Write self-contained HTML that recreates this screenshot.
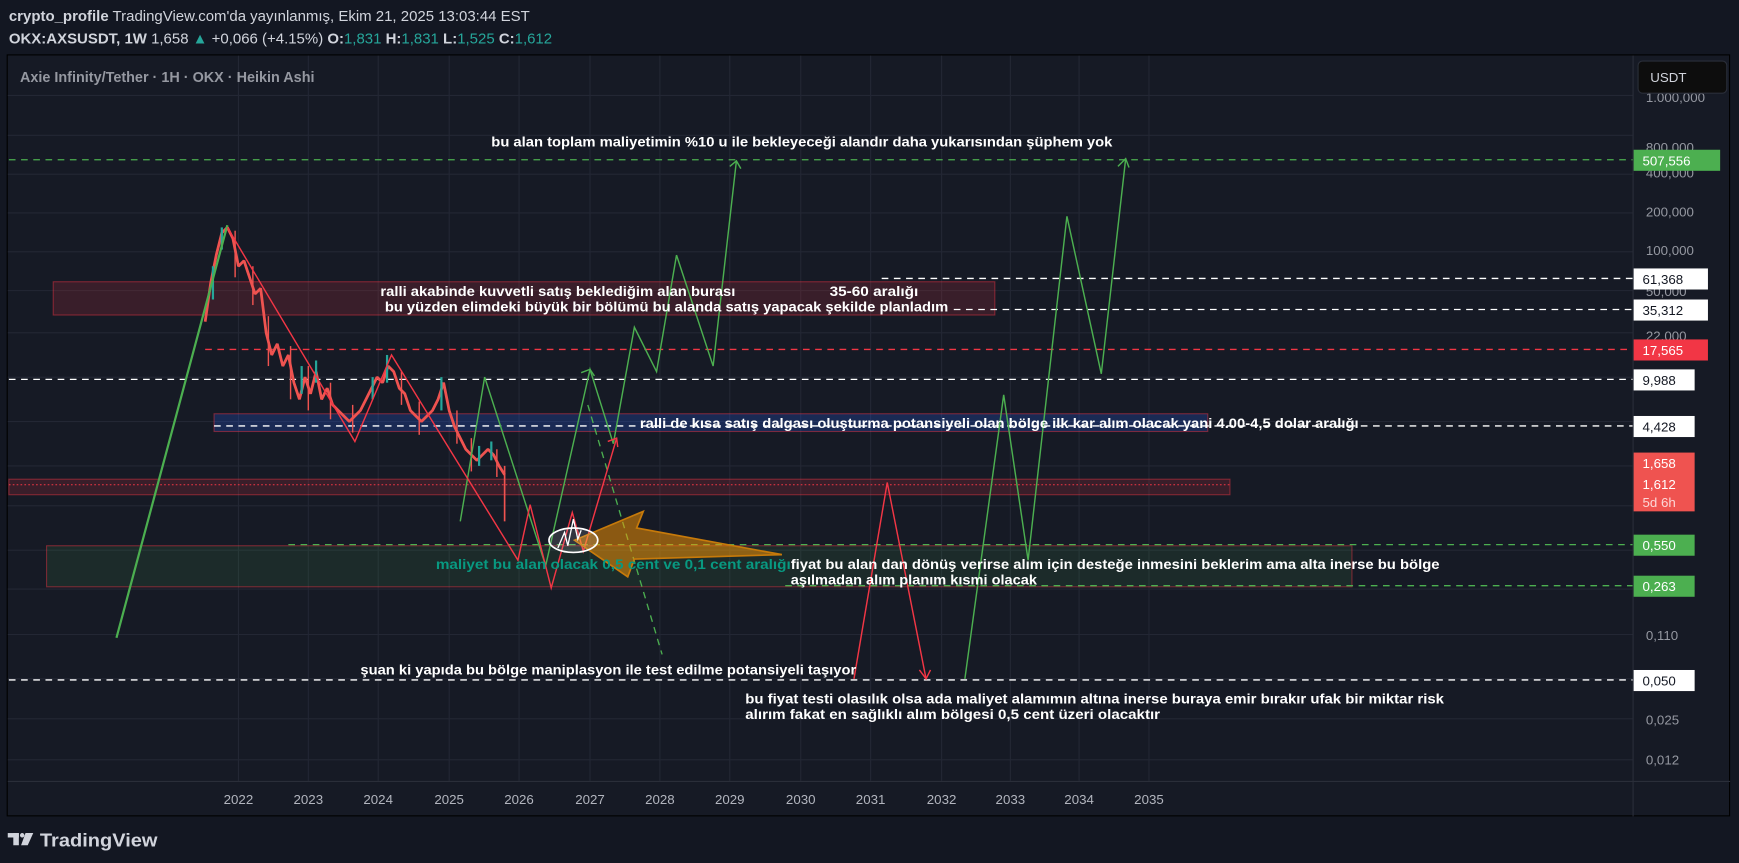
<!DOCTYPE html>
<html><head><meta charset="utf-8"><style>
html,body{margin:0;padding:0;background:#131722;overflow:hidden}
svg{display:block}
text{font-family:"Liberation Sans",sans-serif}
</style></head><body>
<svg width="1739" height="863" viewBox="0 0 1568 778" preserveAspectRatio="none" xmlns="http://www.w3.org/2000/svg">
<rect x="0" y="0" width="1568" height="778" fill="#131722"/>
<!-- header -->
<text x="8" y="19" font-size="13.5" fill="#d1d4dc"><tspan font-weight="bold">crypto_profile</tspan> TradingView.com'da yayınlanmış, Ekim 21, 2025 13:03:44 EST</text>
<text x="8" y="39" font-size="13.5" fill="#d1d4dc"><tspan font-weight="bold">OKX:AXSUSDT, 1W</tspan> 1,658 <tspan fill="#26a69a">▲</tspan> +0,066 (+4.15%) <tspan font-weight="bold">O:</tspan><tspan fill="#26a69a">1,831</tspan> <tspan font-weight="bold">H:</tspan><tspan fill="#26a69a">1,831</tspan> <tspan font-weight="bold">L:</tspan><tspan fill="#26a69a">1,525</tspan> <tspan font-weight="bold">C:</tspan><tspan fill="#26a69a">1,612</tspan></text>
<!-- chart frame -->
<rect x="6.5" y="49.5" width="1553" height="686" fill="#161a25" stroke="#000" stroke-width="1"/>
<g stroke="#232734" stroke-width="1">
<line x1="7" y1="86" x2="1472" y2="86"/><line x1="7" y1="122" x2="1472" y2="122"/><line x1="7" y1="157" x2="1472" y2="157"/><line x1="7" y1="192" x2="1472" y2="192"/><line x1="7" y1="227" x2="1472" y2="227"/><line x1="7" y1="262" x2="1472" y2="262"/><line x1="7" y1="300" x2="1472" y2="300"/><line x1="7" y1="340" x2="1472" y2="340"/><line x1="7" y1="380" x2="1472" y2="380"/><line x1="7" y1="420" x2="1472" y2="420"/><line x1="7" y1="456" x2="1472" y2="456"/><line x1="7" y1="496" x2="1472" y2="496"/><line x1="7" y1="531" x2="1472" y2="531"/><line x1="7" y1="572" x2="1472" y2="572"/><line x1="7" y1="612" x2="1472" y2="612"/><line x1="7" y1="648" x2="1472" y2="648"/><line x1="7" y1="685" x2="1472" y2="685"/>
<line x1="215" y1="50" x2="215" y2="704"/><line x1="278" y1="50" x2="278" y2="704"/><line x1="341" y1="50" x2="341" y2="704"/><line x1="405" y1="50" x2="405" y2="704"/><line x1="468" y1="50" x2="468" y2="704"/><line x1="532" y1="50" x2="532" y2="704"/><line x1="595" y1="50" x2="595" y2="704"/><line x1="658" y1="50" x2="658" y2="704"/><line x1="722" y1="50" x2="722" y2="704"/><line x1="785" y1="50" x2="785" y2="704"/><line x1="849" y1="50" x2="849" y2="704"/><line x1="911" y1="50" x2="911" y2="704"/><line x1="973" y1="50" x2="973" y2="704"/><line x1="1036" y1="50" x2="1036" y2="704"/>
</g>
<line x1="1472.5" y1="50" x2="1472.5" y2="736" stroke="#2a2e39"/>
<line x1="7" y1="704.5" x2="1560" y2="704.5" stroke="#2a2e39"/>
<text x="18" y="74" font-size="13" font-weight="bold" fill="#9598a1">Axie Infinity/Tether · 1H · OKX · Heikin Ashi</text>
<!-- zones -->
<rect x="48" y="254" width="849" height="30" fill="rgba(242,54,69,0.16)" stroke="rgba(242,54,69,0.45)"/>
<rect x="193" y="373" width="896" height="16" fill="rgba(41,98,255,0.22)" stroke="rgba(242,54,69,0.45)"/>
<rect x="8" y="432" width="1101" height="14" fill="rgba(242,54,69,0.16)" stroke="rgba(242,54,69,0.45)"/>
<rect x="42" y="492" width="1177" height="37" fill="rgba(76,175,80,0.12)" stroke="rgba(242,54,69,0.45)"/>
<!-- dashed lines -->
<g stroke-width="1.2" stroke-dasharray="6,5" fill="none">
<line x1="8" y1="144" x2="1472" y2="144" stroke="#4caf50"/>
<line x1="795" y1="251" x2="1472" y2="251" stroke="#fff"/>
<line x1="860" y1="279" x2="1472" y2="279" stroke="#fff"/>
<line x1="185" y1="315" x2="1472" y2="315" stroke="#f23645"/>
<line x1="8" y1="342" x2="1472" y2="342" stroke="#fff"/>
<line x1="193" y1="384" x2="1472" y2="384" stroke="#fff"/>
<line x1="260" y1="491" x2="1472" y2="491" stroke="#4caf50"/>
<line x1="708" y1="528" x2="1472" y2="528" stroke="#4caf50"/>
<line x1="8" y1="613" x2="1472" y2="613" stroke="#fff"/>
<line x1="530" y1="365" x2="597" y2="590" stroke="#4caf50"/>
</g>
<line x1="8" y1="437" x2="1109" y2="437" stroke="#f23645" stroke-width="1" stroke-dasharray="1.5,2"/>
<!-- candles -->
<polyline fill="none" stroke="#ef5350" stroke-width="2.5" stroke-linejoin="bevel" points="185,290 190,255 195,230 200,210 205,205 210,215 215,240 220,235 225,250 230,265 235,260 240,300 245,320 250,310 255,330 260,320 265,345 270,360 275,340 280,355 285,335 290,360 295,350 300,365 305,370 310,375 315,380 320,375 325,370 330,360 335,350 340,340 345,345 350,330 355,335 360,350 365,355 370,370 375,375 380,380 385,375 390,370 395,360 400,345 405,370 410,385 415,395 420,405 425,410 430,415 435,410 440,405 445,410 450,420 455,428"/>
<g stroke="#ef5350" stroke-width="1.3"><line x1="212" y1="208" x2="212" y2="250"/><line x1="228" y1="240" x2="228" y2="275"/><line x1="242" y1="285" x2="242" y2="330"/><line x1="262" y1="312" x2="262" y2="360"/><line x1="278" y1="330" x2="278" y2="370"/><line x1="298" y1="345" x2="298" y2="378"/><line x1="318" y1="365" x2="318" y2="390"/><line x1="362" y1="335" x2="362" y2="365"/><line x1="378" y1="362" x2="378" y2="392"/><line x1="412" y1="370" x2="412" y2="400"/><line x1="425" y1="395" x2="425" y2="425"/><line x1="448" y1="405" x2="448" y2="430"/></g>
<g stroke="#26a69a" stroke-width="2"><line x1="192" y1="270" x2="192" y2="240"/><line x1="200" y1="225" x2="200" y2="205"/><line x1="272" y1="355" x2="272" y2="330"/><line x1="285" y1="345" x2="285" y2="325"/><line x1="336" y1="360" x2="336" y2="340"/><line x1="349" y1="345" x2="349" y2="320"/><line x1="398" y1="370" x2="398" y2="340"/><line x1="432" y1="420" x2="432" y2="402"/><line x1="443" y1="415" x2="443" y2="398"/></g>
<line x1="455" y1="420" x2="455" y2="470" stroke="#ef5350" stroke-width="1.5"/>
<!-- green projection -->
<g fill="none" stroke="#4caf50" stroke-width="1.3">
<polyline points="105,575 205,203" stroke-width="2"/>
<polyline points="415,470 437,340 492,510 532,333 553,400 572,295 592,335 610,230 643,330 664,145"/>
<polyline points="870,612 905,356 927,505 962,195 993,337 1015,143"/>
<polyline points="524,336 532,333 536,339"/><polyline points="658,150 664,145 668,152"/><polyline points="1008,150 1015,143 1018,151"/>
</g>
<!-- red projection -->
<g fill="none" stroke="#f23645" stroke-width="1.3">
<polyline points="205,205 320,398 353,320 467,505 478,455 497,530 516,462 526,497 556,395"/>
<polyline points="770,612 800,435 835,612"/>
<polyline points="829,604 835,612 839,604"/><polyline points="548,398 556,395 557,403"/>
</g>
<!-- orange arrow -->
<polygon points="518,487 580,461 574,476 705,500 572,504 566,520" fill="rgba(255,152,0,0.5)" stroke="#c77a0a" stroke-width="1.5"/>
<!-- ellipse -->
<ellipse cx="517" cy="487" rx="22" ry="11" fill="rgba(255,255,255,0.12)" stroke="#fff" stroke-width="1.5"/>
<polyline points="503,494 509,480 512,492 517,468 521,486 524,478" fill="none" stroke="#fff" stroke-width="1.2"/>
<!-- texts -->
<g font-size="12.5" font-weight="bold" fill="#fff">
<text x="443" y="132" textLength="560" lengthAdjust="spacingAndGlyphs">bu alan toplam maliyetimin %10 u ile bekleyeceği alandır daha yukarısından şüphem yok</text>
<text x="343" y="267" textLength="320" lengthAdjust="spacingAndGlyphs">ralli akabinde kuvvetli satış beklediğim alan burası</text>
<text x="748" y="267" textLength="80" lengthAdjust="spacingAndGlyphs">35-60 aralığı</text>
<text x="347" y="281" textLength="508" lengthAdjust="spacingAndGlyphs">bu yüzden elimdeki büyük bir bölümü bu alanda satış yapacak şekilde planladım</text>
<text x="577" y="386" textLength="648" lengthAdjust="spacingAndGlyphs">ralli de kısa satış dalgası oluşturma potansiyeli olan bölge ilk kar alım olacak yani 4.00-4,5 dolar aralığı</text>
<text x="393" y="513" fill="#089981" textLength="320" lengthAdjust="spacingAndGlyphs">maliyet  bu alan olacak 0,5 cent ve 0,1 cent aralığı</text>
<text x="713" y="513" textLength="585" lengthAdjust="spacingAndGlyphs">fiyat bu alan dan dönüş verirse alım için desteğe inmesini beklerim ama alta inerse bu bölge</text>
<text x="713" y="527" textLength="222" lengthAdjust="spacingAndGlyphs">aşılmadan alım planım kısmi olacak</text>
<text x="325" y="608" textLength="447" lengthAdjust="spacingAndGlyphs">şuan ki yapıda bu bölge maniplasyon ile test edilme potansiyeli taşıyor</text>
<text x="672" y="634" textLength="630" lengthAdjust="spacingAndGlyphs">bu fiyat testi olasılık olsa ada maliyet alamımın altına inerse buraya emir bırakır ufak bir miktar risk</text>
<text x="672" y="648" textLength="374" lengthAdjust="spacingAndGlyphs">alırım fakat en sağlıklı alım bölgesi 0,5 cent üzeri olacaktır</text>
</g>
<!-- price axis -->
<g font-size="12" fill="#9598a1">
<text x="1484" y="92">1.000,000</text>
<text x="1484" y="137">800,000</text>
<text x="1484" y="160">400,000</text>
<text x="1484" y="195">200,000</text>
<text x="1484" y="230">100,000</text>
<text x="1484" y="267">50,000</text>
<text x="1484" y="307">22,000</text>
<text x="1484" y="347">10,000</text>
<text x="1484" y="383">5,000</text>
<text x="1484" y="577">0,110</text>
<text x="1484" y="653">0,025</text>
<text x="1484" y="689">0,012</text>
</g>
<rect x="1477" y="55" width="80" height="29" rx="4" fill="#0d0d0d" stroke="#2a2e39"/>
<text x="1488" y="74" font-size="12" fill="#d1d4dc">USDT</text>
<g font-size="12">
<rect x="1473" y="135" width="78" height="19" fill="#4caf50"/><text x="1481" y="149" fill="#fff">507,556</text>
<rect x="1473" y="242" width="67" height="19" fill="#fff"/><text x="1481" y="256" fill="#131722">61,368</text>
<rect x="1473" y="270" width="67" height="19" fill="#fff"/><text x="1481" y="284" fill="#131722">35,312</text>
<rect x="1473" y="306" width="67" height="19" fill="#f23645"/><text x="1481" y="320" fill="#fff">17,565</text>
<rect x="1473" y="333" width="55" height="19" fill="#fff"/><text x="1481" y="347" fill="#131722">9,988</text>
<rect x="1473" y="375" width="55" height="19" fill="#fff"/><text x="1481" y="389" fill="#131722">4,428</text>
<rect x="1473" y="408" width="55" height="53" fill="#ef5350"/><text x="1481" y="422" fill="#fff">1,658</text><text x="1481" y="441" fill="#fff">1,612</text><text x="1481" y="457" fill="#fcd7d7">5d 6h</text>
<rect x="1473" y="482" width="55" height="19" fill="#4caf50"/><text x="1481" y="496" fill="#fff">0,550</text>
<rect x="1473" y="519" width="55" height="19" fill="#4caf50"/><text x="1481" y="533" fill="#fff">0,263</text>
<rect x="1473" y="604" width="55" height="19" fill="#fff"/><text x="1481" y="618" fill="#131722">0,050</text>
</g>
<!-- years -->
<g font-size="12" fill="#b2b5be" text-anchor="middle">
<text x="215" y="725">2022</text><text x="278" y="725">2023</text><text x="341" y="725">2024</text><text x="405" y="725">2025</text><text x="468" y="725">2026</text><text x="532" y="725">2027</text><text x="595" y="725">2028</text><text x="658" y="725">2029</text><text x="722" y="725">2030</text><text x="785" y="725">2031</text><text x="849" y="725">2032</text><text x="911" y="725">2033</text><text x="973" y="725">2034</text><text x="1036" y="725">2035</text>
</g>
<!-- logo -->
<g fill="#d1d4dc">
<rect x="7" y="751" width="10" height="4"/><rect x="12" y="751" width="5" height="11"/>
<circle cx="20" cy="753" r="2"/>
<polygon points="23,751 30,751 25,762 19,762"/>
</g>
<text x="36" y="763" font-size="17" font-weight="bold" fill="#d1d4dc" textLength="106" lengthAdjust="spacingAndGlyphs">TradingView</text>
</svg>
</body></html>
